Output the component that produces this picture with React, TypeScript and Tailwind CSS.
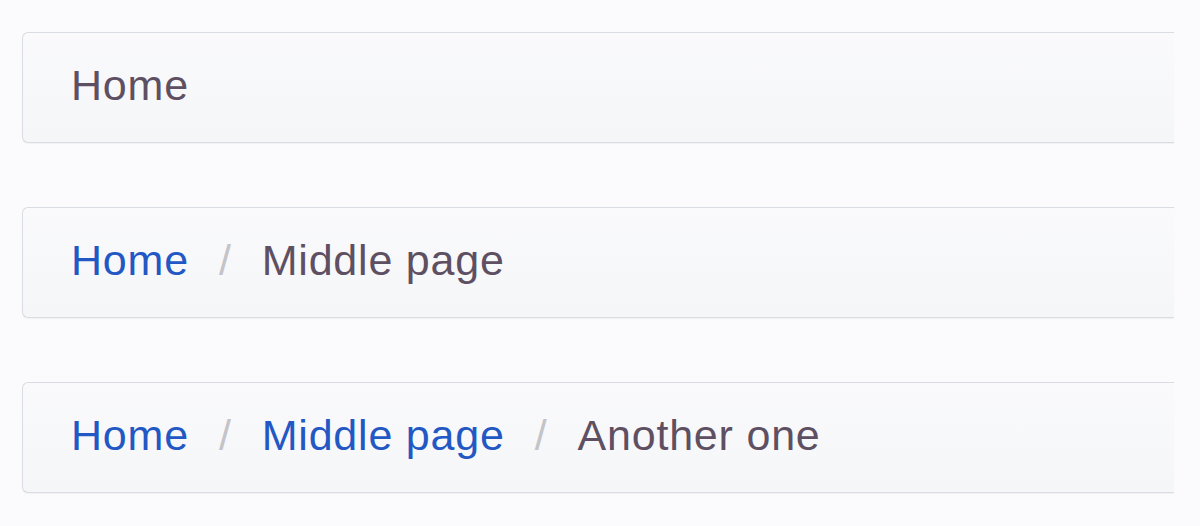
import React from 'react';

type Crumb = { label: string; href?: string };

const trails: Crumb[][] = [
  [{ label: 'Home' }],
  [{ label: 'Home', href: '#' }, { label: 'Middle page' }],
  [{ label: 'Home', href: '#' }, { label: 'Middle page', href: '#' }, { label: 'Another one' }],
];

const Breadcrumb: React.FC<{ items: Crumb[] }> = ({ items }) => (
  <ol className="flex items-center h-[111px] w-[1152px] pl-[48px] pb-[5px] rounded-l-[6px] border border-r-0 border-[#d9dce2] bg-gradient-to-b from-[#fafafc] to-[#f5f6f8] shadow-[0_1px_1px_rgba(0,0,0,0.04)]">
    {items.map((item, i) => (
      <li key={i} className="flex items-center">
        {i > 0 && <span className="px-[30px] text-[#c4c4c8] font-light">/</span>}
        {item.href ? (
          <a href={item.href} className="text-[#2358c4]">
            {item.label}
          </a>
        ) : (
          <span className="text-[#5e5062]">{item.label}</span>
        )}
      </li>
    ))}
  </ol>
);

const App: React.FC = () => {
  return (
    <div
      className="min-h-screen bg-[#fbfbfd] pt-[32px] pl-[22px] flex flex-col gap-[64px] text-[43px] tracking-[0.8px] leading-none"
      style={{ fontFamily: '"Liberation Sans", Arial, sans-serif' }}
    >
      {trails.map((t, i) => (
        <Breadcrumb key={i} items={t} />
      ))}
    </div>
  );
};

export default App;
